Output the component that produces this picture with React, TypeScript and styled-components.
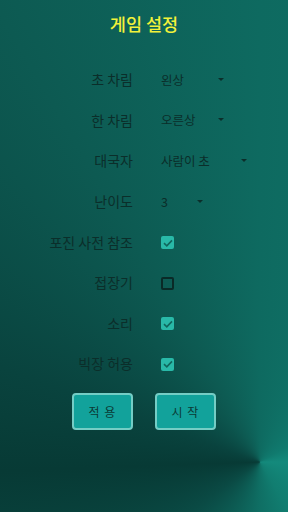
import React, { useState } from 'react';
import styled, { createGlobalStyle } from 'styled-components';

const GlobalStyle = createGlobalStyle`
  html, body {
    margin: 0;
    padding: 0;
  }
  body {
    font-family: "Noto Sans CJK KR", "Noto Sans", sans-serif;
  }
`;

const Screen = styled.div`
  width: 288px;
  min-height: 512px;
  box-sizing: border-box;
  display: flex;
  flex-direction: column;
  align-items: center;
  background: conic-gradient(
    at 260px 462px,
    #0e6a60 0deg,
    #107a6e 60deg,
    #148a7c 90deg,
    #117d70 150deg,
    #0f6f64 180deg,
    #0a4a44 235deg,
    #073a35 268deg,
    #09433e 290deg,
    #0d5a52 330deg,
    #0e6a60 360deg
  );
`;

const Title = styled.h1`
  margin: 12px 0 0;
  font-size: 17.5px;
  line-height: 24px;
  font-weight: 500;
  color: #f2f23a;
`;

const Form = styled.div`
  margin-top: 23px;
  width: 100%;
  display: grid;
  grid-template-columns: 133px 1fr;
  grid-auto-rows: 40.6px;
  column-gap: 28px;
  align-items: center;
`;

const Label = styled.div`
  text-align: right;
  font-size: 14px;
  color: #0b2e2a;
  white-space: nowrap;
`;

const Select = styled.div<{ $w: number }>`
  width: ${p => p.$w}px;
  display: flex;
  align-items: center;
  justify-content: space-between;
  font-size: 12.5px;
  color: #0b2e2a;
`;

const Arrow = styled.span`
  width: 0;
  height: 0;
  margin-right: 2px;
  border-left: 3px solid transparent;
  border-right: 3px solid transparent;
  border-top: 3px solid #0b2e2a;
`;

const Box = styled.div<{ $on: boolean }>`
  width: 13px;
  height: 13px;
  box-sizing: border-box;
  border-radius: 2px;
  display: flex;
  align-items: center;
  justify-content: center;
  background: ${p => (p.$on ? '#29b9a8' : 'transparent')};
  border: ${p => (p.$on ? 'none' : '2px solid #0a2a27')};
  margin-top: 2px;
`;

const Buttons = styled.div`
  display: flex;
  gap: 22px;
  margin-top: 9px;
`;

const Button = styled.button`
  width: 61px;
  height: 37px;
  box-sizing: border-box;
  border: 2px solid #74cdc5;
  border-radius: 4px;
  background: #12a29b;
  color: #0b3a35;
  font-family: "Noto Sans CJK KR", sans-serif;
  font-size: 12px;
  padding: 0;
  letter-spacing: 1px;
`;

const Check = () => (
  <svg width="10" height="8" viewBox="0 0 10 8">
    <path d="M1 4.2 L3.8 6.8 L9 1.4" stroke="#10675d" strokeWidth="1.6" fill="none" />
  </svg>
);

const CheckBox = ({ on, onClick }: { on: boolean; onClick: () => void }) => (
  <Box $on={on} onClick={onClick}>{on && <Check />}</Box>
);

export default function App() {
  const [checks, setChecks] = useState<boolean[]>([true, false, true, true]);
  const toggle = (i: number) => setChecks(c => c.map((v, j) => (j === i ? !v : v)));

  const selects = [
    { label: '초 차림', value: '왼상', w: 65 },
    { label: '한 차림', value: '오른상', w: 65 },
    { label: '대국자', value: '사람이 초', w: 88 },
    { label: '난이도', value: '3', w: 44 },
  ];
  const boxes = ['포진 사전 참조', '접장기', '소리', '빅장 허용'];

  return (
    <Screen>
      <GlobalStyle />
      <Title>게임 설정</Title>
      <Form>
        {selects.map(s => (
          <React.Fragment key={s.label}>
            <Label>{s.label}</Label>
            <Select $w={s.w}>
              <span>{s.value}</span>
              <Arrow />
            </Select>
          </React.Fragment>
        ))}
        {boxes.map((b, i) => (
          <React.Fragment key={b}>
            <Label>{b}</Label>
            <CheckBox on={checks[i]} onClick={() => toggle(i)} />
          </React.Fragment>
        ))}
      </Form>
      <Buttons>
        <Button>적 용</Button>
        <Button>시 작</Button>
      </Buttons>
    </Screen>
  );
}
